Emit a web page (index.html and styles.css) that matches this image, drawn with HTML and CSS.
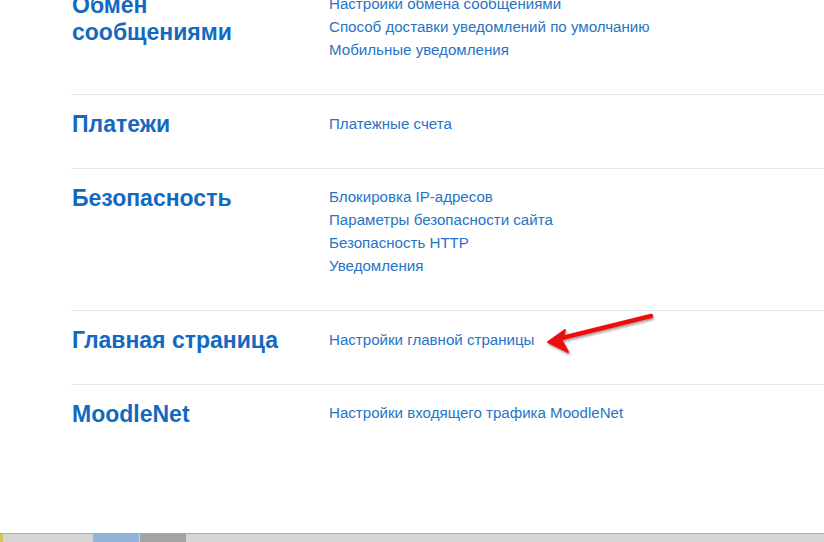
FILE: index.html
```html
<!DOCTYPE html>
<html lang="ru">
<head>
<meta charset="utf-8">
<title>Администрирование</title>
<link rel="stylesheet" href="styles.css">
</head>
<body>
<div class="window">
  <div class="viewport">
    <div class="content">
      <section class="group">
        <h2 class="group-title">Обмен<br>сообщениями</h2>
        <ul class="links">
          <li><a href="#">Настройки обмена сообщениями</a></li>
          <li><a href="#">Способ доставки уведомлений по умолчанию</a></li>
          <li><a href="#">Мобильные уведомления</a></li>
        </ul>
      </section>
      <section class="group">
        <h2 class="group-title">Платежи</h2>
        <ul class="links">
          <li><a href="#">Платежные счета</a></li>
        </ul>
      </section>
      <section class="group">
        <h2 class="group-title">Безопасность</h2>
        <ul class="links">
          <li><a href="#">Блокировка IP-адресов</a></li>
          <li><a href="#">Параметры безопасности сайта</a></li>
          <li><a href="#">Безопасность HTTP</a></li>
          <li><a href="#">Уведомления</a></li>
        </ul>
      </section>
      <section class="group">
        <h2 class="group-title">Главная страница</h2>
        <ul class="links">
          <li><a href="#">Настройки главной страницы</a></li>
        </ul>
      </section>
      <section class="group">
        <h2 class="group-title">MoodleNet</h2>
        <ul class="links">
          <li><a href="#">Настройки входящего трафика MoodleNet</a></li>
        </ul>
      </section>
    </div>
    <svg class="arrow" width="130" height="50" viewBox="0 0 130 50">
      <defs>
        <filter id="sh" x="-20%" y="-50%" width="140%" height="200%">
          <feDropShadow dx="1" dy="2" stdDeviation="1.2" flood-color="#000" flood-opacity="0.35"/>
        </filter>
      </defs>
      <g filter="url(#sh)" stroke="#ee1111" fill="#ee1111" stroke-linecap="round" stroke-linejoin="round">
        <line x1="111" y1="8" x2="14" y2="32" stroke-width="4.5"/>
        <path d="M8 34 L25 22 L22 33 L28 44 Z" stroke-width="2"/>
      </g>
    </svg>
  </div>
  <div class="taskbar">
    <span class="tb tb-a"></span>
    <span class="tb tb-b"></span>
    <span class="tb tb-active"></span>
    <span class="tb tb-dark"></span>
  </div>
</div>
</body>
</html>
```
FILE: styles.css
```css
html, body {
  margin: 0;
  padding: 0;
  background: #ffffff;
}
body {
  font-family: "Liberation Sans", Arial, sans-serif;
}
.window {
  display: flex;
  flex-direction: column;
  height: 542px;
  overflow: hidden;
}
.viewport {
  flex: 1;
  position: relative;
  overflow: hidden;
  background: #ffffff;
}
.content {
  margin-top: -23px;
  padding-left: 71px;
}
.group {
  display: grid;
  grid-template-columns: 258px 1fr;
  align-items: start;
  padding: 16.5px 0 33.1px 0;
  border-bottom: 1px solid #e6e6e6;
}
.group:first-child {
  padding-top: 15px;
}
.group:last-child {
  border-bottom: none;
}
.group-title {
  margin: -0.5px 0 -4px 1px;
  font-size: 23px;
  line-height: 27px;
  font-weight: bold;
  color: #1369bf;
}
.links {
  list-style: none;
  margin: 0;
  padding: 0;
}
.links li {
  font-size: 15.1px;
  line-height: 23px;
}
.links a {
  color: #2774c6;
  text-decoration: none;
}
.arrow {
  position: absolute;
  left: 540px;
  top: 308px;
}
.taskbar {
  height: 8px;
  border-top: 1px solid #ababab;
  background: #d6d6d6;
  display: flex;
}
.tb {
  display: block;
  height: 100%;
}
.tb-a {
  width: 3px;
  background: #d8c35a;
}
.tb-b {
  width: 90px;
}
.tb-active {
  width: 46px;
  background: #93b3d8;
  border-right: 1px solid #c8d6e6;
}
.tb-dark {
  width: 46px;
  background: #a3a3a3;
}
```
